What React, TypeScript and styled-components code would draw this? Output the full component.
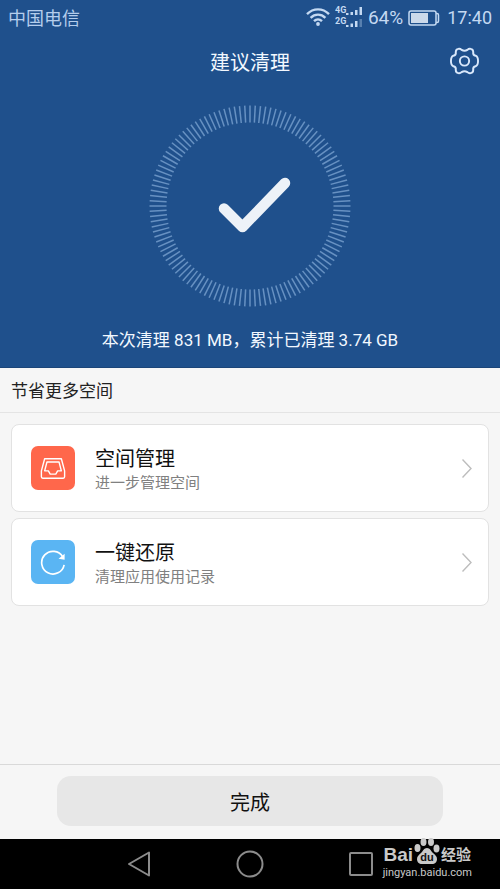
import React from "react";
import styled, { createGlobalStyle } from "styled-components";

const GlobalStyle = createGlobalStyle`
  *, *::before, *::after { box-sizing: border-box; }
  body { margin: 0; background: #f6f6f6; }
  button { font: inherit; color: inherit; border: 0; padding: 0; background: none; cursor: pointer; }
  h1, h2, p { margin: 0; font-weight: 400; }
  svg { display: block; }
`;

const Screen = styled.div`
  display: flex;
  flex-direction: column;
  min-height: 100vh;
  background: #f6f6f6;
  color: #111;
  font-family: Roboto, "Noto Sans CJK SC", sans-serif;
`;

const Hero = styled.header`
  display: flex;
  flex-direction: column;
  color: #f2f8ff;
  background: #1f508c;
  border-bottom: 1px solid #1b4579;
`;

const StatusBar = styled.div`
  display: flex;
  align-items: center;
  justify-content: space-between;
  height: 36px;
  padding: 0 8px;
  color: #b4cdec;
  font-size: 18px;
  line-height: 24px;
`;

const Carrier = styled.span`
  padding-top: 2px;
`;

const StatusGroup = styled.div`
  display: flex;
  align-items: center;
  gap: 5px;
  color: #c4d9f2;
`;

const Percent = styled.span`
  font-size: 19px;
`;

const Clock = styled.time`
  margin-left: 2px;
`;

const TitleBar = styled.div`
  display: grid;
  grid-template-columns: 32px 1fr 32px;
  align-items: center;
  height: 50px;
  padding: 0 20px;
`;

const Title = styled.h1`
  grid-column: 2;
  padding-top: 3px;
  font-size: 20px;
  line-height: 28px;
  text-align: center;
`;

const IconButton = styled.button`
  display: flex;
  align-items: center;
  justify-content: center;
  width: 32px;
  height: 32px;
`;

const Dial = styled.div`
  display: flex;
  justify-content: center;
  padding: 18px 0;
`;

const Summary = styled.p`
  padding: 2px 0 15px;
  font-size: 17px;
  line-height: 24px;
  text-align: center;
`;

const SectionTitle = styled.h2`
  padding: 11px 11px 9px;
  border-bottom: 1px solid #e4e4e4;
  color: #222;
  font-size: 17px;
  line-height: 24px;
`;

const CardList = styled.main`
  display: flex;
  flex: 1;
  flex-direction: column;
  gap: 6px;
  padding: 11px;
`;

const Card = styled.button`
  display: flex;
  align-items: center;
  gap: 20px;
  height: 88px;
  padding: 0 16px 0 19px;
  border: 1px solid #e2e2e2;
  border-radius: 8px;
  background: #fff;
  text-align: left;
`;

const Tile = styled.span<{ $color: string }>`
  display: flex;
  align-items: center;
  justify-content: center;
  width: 44px;
  height: 44px;
  border-radius: 7px;
  background: ${(p) => p.$color};
`;

const CardText = styled.span`
  display: flex;
  flex: 1;
  flex-direction: column;
  padding-top: 4px;
`;

const CardTitle = styled.span`
  font-size: 20px;
  line-height: 25px;
`;

const CardNote = styled.span`
  color: #808080;
  font-size: 15px;
  line-height: 22px;
`;

const Footer = styled.footer`
  display: flex;
  justify-content: center;
  padding: 11px 57px 13px;
  border-top: 1px solid #d9d9d9;
`;

const DoneButton = styled.button`
  flex: 1;
  height: 50px;
  padding-top: 4px;
  border-radius: 14px;
  background: #e7e7e7;
  font-size: 20px;
  line-height: 28px;
`;

const NavBar = styled.nav`
  position: relative;
  display: flex;
  align-items: center;
  justify-content: center;
  gap: 79px;
  height: 50px;
  background: #000;
`;

const Watermark = styled.div`
  position: absolute;
  right: 28px;
  bottom: 9px;
  display: flex;
  flex-direction: column;
  align-items: center;
  gap: 1px;
  color: #c9c9c9;
  font-size: 11px;
  line-height: 14px;
`;

const Brand = styled.span`
  display: flex;
  align-items: flex-end;
  font-family: "Liberation Sans", "Noto Sans CJK SC", sans-serif;
  font-size: 19px;
  font-weight: 700;
  line-height: 20px;
`;

const BrandSuffix = styled.span`
  font-size: 15px;
`;

const TICKS = Array.from({ length: 120 }, (_, i) => i * 3);

const WifiIcon = () => (
  <svg width="24" height="20" viewBox="0 0 24 20" fill="none" stroke="currentColor" strokeWidth="2.4">
    <path d="M1 6.2C7.3-.2 16.7-.2 23 6.2M4.600 9.800c4.300-4.200 10.500-4.200 14.800 0M8 13.200c2.400-2.300 5.600-2.300 8 0" />
    <circle cx="12" cy="16" r="1.900" fill="currentColor" stroke="none" />
  </svg>
);

const SignalIcon = () => (
  <svg width="28" height="24" viewBox="0 0 28 24" fill="currentColor">
    <text x="0" y="7" fontSize="9" fontWeight="700">4G</text>
    <text x="0" y="18" fontSize="9" fontWeight="700">2G</text>
    <path d="M11 7h2.500v2H11zM15.500 6h2.500v3h-2.500zM20 4h2.500v5H20zM24.500 1H27v8h-2.500zM11 19h2.500v2H11zM15.500 17.500h2.500V21h-2.500zM20 15h2.500v6H20z" />
    <path d="M24.500 13H27v8h-2.500z" opacity=".35" />
  </svg>
);

const BatteryIcon = () => (
  <svg width="32" height="16" viewBox="0 0 32 16" fill="none" stroke="currentColor" strokeWidth="1.500">
    <rect x="1" y="1" width="27" height="14" rx="2" />
    <path d="M28 3.500h1q1.500 0 1.500 1.500v6q0 1.500-1.500 1.500H28" />
    <path d="M3 3h17v10H3z" fill="#cbd9ea" stroke="none" />
  </svg>
);

const GearIcon = () => (
  <svg width="29" height="28" viewBox="0 0 30 28" fill="none" stroke="#d9e8fb" strokeWidth="2" strokeLinejoin="round">
    <path d="M8.500 1.500Q6 2 6 4.500Q6.500 8 3.500 8.500Q1 9.500 1 14T3.500 19.500Q6.500 20 6 23.500Q6 26 8.500 26.500Q10.500 27 12 25.500Q15 23.500 18 25.500Q19.500 27 21.500 26.500Q24 26 24 23.500Q23.500 20 26.500 19.500Q29 18.500 29 14T26.500 8.500Q23.500 8 24 4.500Q24 2 21.500 1.500Q19.500 1 18 2.500Q15 4.500 12 2.500Q10.500 1 8.500 1.500Z" />
    <circle cx="15" cy="14" r="4.800" />
  </svg>
);

const DialIcon = () => (
  <svg width="204" height="204" viewBox="-102 -102 204 204" fill="none" role="img" aria-label="清理完成">
    <g stroke="#6791c2" strokeWidth="1.500">
      {TICKS.map((angle) => (
        <path key={angle} d="M0-83.500V-100.500" transform={`rotate(${angle})`} />
      ))}
    </g>
    <path d="M-26 2.500L-7.500 21L35-23" stroke="#edf2f8" strokeWidth="10.500" strokeLinecap="round" strokeLinejoin="round" />
  </svg>
);

const TrayIcon = () => (
  <svg width="26" height="23" viewBox="0 0 28 24" fill="none" stroke="#fff" strokeWidth="1.500" strokeLinejoin="round">
    <path d="M5 1.500h18l3.500 13v6.500q0 1.500-1.500 1.500H3q-1.500 0-1.500-1.500v-6.500z" />
    <path d="M7.500 5h13l2.500 9.500h-4l-2 3.500h-6l-2-3.500H5z" />
  </svg>
);

const RestoreIcon = () => (
  <svg width="26" height="26" viewBox="0 0 28 28" fill="none" stroke="#fff" strokeWidth="1.800">
    <path d="M24.500 8.500A12.200 12.200 0 1 0 26 17" />
    <path d="M26.500 5v6.500l-6.500-1z" fill="#fff" stroke="none" />
  </svg>
);

const Chevron = () => (
  <svg width="10" height="19" viewBox="0 0 10 19" fill="none" stroke="#bdbdbd" strokeWidth="1.400">
    <path d="M.5 .5l8.500 9-8.500 9" />
  </svg>
);

const Paw = () => (
  <svg width="28" height="28" viewBox="0 0 26 28" fill="currentColor">
    <ellipse cx="3.500" cy="11" rx="3" ry="4" />
    <ellipse cx="9.500" cy="5" rx="3" ry="4" />
    <ellipse cx="17" cy="5" rx="3" ry="4" />
    <ellipse cx="22.500" cy="11.500" rx="3" ry="4" />
    <path d="M13 11c3 0 4 3 6 5s4 3 4 6-2 5-5 5H8c-3 0-5-2-5-5s2-4 4-6 3-5 6-5z" />
    <text x="13" y="24" textAnchor="middle" fontSize="11" fontWeight="700" fill="#111">du</text>
  </svg>
);

const ACTIONS = [
  { title: "空间管理", note: "进一步管理空间", color: "#ff674b", Icon: TrayIcon },
  { title: "一键还原", note: "清理应用使用记录", color: "#5ab5f3", Icon: RestoreIcon },
];

export default function App() {
  return (
    <Screen>
      <GlobalStyle />
      <Hero>
        <StatusBar>
          <Carrier>中国电信</Carrier>
          <StatusGroup>
            <WifiIcon />
            <SignalIcon />
            <Percent>64%</Percent>
            <BatteryIcon />
            <Clock>17:40</Clock>
          </StatusGroup>
        </StatusBar>
        <TitleBar>
          <Title>建议清理</Title>
          <IconButton aria-label="设置"><GearIcon /></IconButton>
        </TitleBar>
        <Dial><DialIcon /></Dial>
        <Summary>本次清理 831 MB，累计已清理 3.74 GB</Summary>
      </Hero>
      <SectionTitle>节省更多空间</SectionTitle>
      <CardList>
        {ACTIONS.map(({ title, note, color, Icon }) => (
          <Card key={title}>
            <Tile $color={color}><Icon /></Tile>
            <CardText>
              <CardTitle>{title}</CardTitle>
              <CardNote>{note}</CardNote>
            </CardText>
            <Chevron />
          </Card>
        ))}
      </CardList>
      <Footer>
        <DoneButton>完成</DoneButton>
      </Footer>
      <NavBar>
        <IconButton aria-label="返回">
          <svg width="24" height="28" viewBox="0 0 24 28" fill="none" stroke="#8c8c8c" strokeWidth="2" strokeLinejoin="round">
            <path d="M22 2.500v23L2 14z" />
          </svg>
        </IconButton>
        <IconButton aria-label="主屏幕">
          <svg width="28" height="28" viewBox="0 0 28 28" fill="none" stroke="#8c8c8c" strokeWidth="2">
            <circle cx="14" cy="14" r="12.500" />
          </svg>
        </IconButton>
        <IconButton aria-label="最近任务">
          <svg width="24" height="24" viewBox="0 0 24 24" fill="none" stroke="#8c8c8c" strokeWidth="2">
            <rect x="1" y="1" width="22" height="22" rx="1" />
          </svg>
        </IconButton>
        <Watermark>
          <Brand>Bai<Paw /><BrandSuffix>经验</BrandSuffix></Brand>
          <span>jingyan.baidu.com</span>
        </Watermark>
      </NavBar>
    </Screen>
  );
}
